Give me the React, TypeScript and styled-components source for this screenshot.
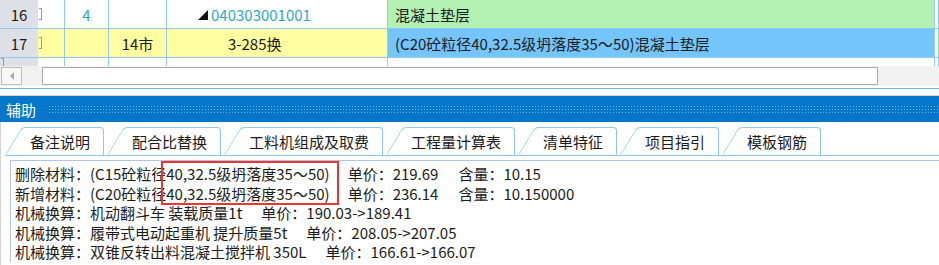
import styled, { createGlobalStyle } from 'styled-components';

const GlobalStyle = createGlobalStyle`
  html, body {
    margin: 0;
    padding: 0;
    background: #fff;
  }
  body {
    font-family: "Noto Sans CJK SC", "Noto Sans", sans-serif;
    font-size: 15px;
    color: #1b1b1b;
  }
`;

const Page = styled.div`
  width: 939px;
  height: 265px;
  overflow: hidden;
  display: flex;
  flex-direction: column;
`;

/* ---------- grid ---------- */

const Grid = styled.div`
  height: 66px;
  overflow: hidden;
  display: flex;
  flex-direction: column;
`;

const Row = styled.div<{ $h: number }>`
  display: grid;
  grid-template-columns: 38px 27px 44px 58px 221px 547px 1fr;
  height: ${(p) => p.$h}px;
  flex-shrink: 0;
  border-bottom: 1px solid #8fcbf1;
`;

const Cell = styled.div<{ $bg?: string; $color?: string; $pad?: number; $center?: boolean }>`
  box-sizing: border-box;
  display: flex;
  align-items: center;
  justify-content: ${(p) => (p.$center ? 'center' : 'flex-start')};
  padding-left: ${(p) => p.$pad ?? 0}px;
  background: ${(p) => p.$bg ?? '#fff'};
  color: ${(p) => p.$color ?? '#1b1b1b'};
  border-right: 1px solid #8fcbf1;
  white-space: nowrap;
  overflow: hidden;
  position: relative;
`;

const HeadCell = styled(Cell)`
  background: #dde0e6;
  justify-content: center;
  border-right: none;
`;

const Bracket = styled.span`
  position: absolute;
  left: 1px;
  top: 50%;
  margin-top: -6px;
  width: 2px;
  height: 10px;
  border: 1px solid #9a9a9a;
  border-left: none;
`;

const Tri = styled.span`
  display: inline-block;
  width: 0;
  height: 0;
  border-left: 10px solid transparent;
  border-bottom: 10px solid #111;
  margin-right: 3px;
  margin-top: 2px;
`;

/* ---------- scrollbar ---------- */

const ScrollBar = styled.div`
  height: 20px;
  background: #f1f1f1;
  display: flex;
  align-items: center;
  gap: 20px;
  padding-left: 1px;
`;

const ScrollBtn = styled.div`
  box-sizing: border-box;
  width: 21px;
  height: 18px;
  border: 1px solid #bdbdbd;
  background: #f7f7f7;
  display: flex;
  align-items: center;
  justify-content: center;
  &::before {
    content: '';
    border-right: 4px solid #a8a8a8;
    border-top: 4px solid transparent;
    border-bottom: 4px solid transparent;
  }
`;

const Thumb = styled.div`
  box-sizing: border-box;
  width: 836px;
  height: 18px;
  border: 1px solid #ababab;
  background: #fff;
`;

const Divider = styled.div`
  margin-top: 2px;
  height: 1px;
  background: #6ab8ee;
  margin-bottom: 6px;
`;

/* ---------- assist panel ---------- */

const Header = styled.div`
  height: 27px;
  background: #0577cb;
  display: flex;
  align-items: center;
  padding-left: 6px;
  color: #fff;
  border-top: 1px solid #d6d6d6;
  box-sizing: border-box;
`;

const Dots = styled.div`
  flex: 1;
  margin-left: 12px;
  height: 8px;
  background-image: radial-gradient(circle, rgba(150, 200, 240, 0.75) 0.7px, transparent 1px);
  background-size: 3px 3px;
`;

const Body = styled.div`
  flex: 1;
  border-left: 1px solid #d4d4d4;
  display: flex;
  flex-direction: column;
`;

const TabStrip = styled.div`
  height: 34px;
  box-sizing: border-box;
  margin-left: 4px;
  display: flex;
  align-items: flex-end;
  gap: 3px;
  border-bottom: 1px solid #8cc8f0;
`;

const Tab = styled.div`
  position: relative;
  height: 28px;
  box-sizing: border-box;
  padding: 1px 14px 0 25px;
  display: flex;
  align-items: center;
  white-space: nowrap;
  color: #1b1b1b;

  &::before {
    content: '';
    position: absolute;
    left: 0;
    bottom: 0;
    width: 20px;
    height: 100%;
    box-sizing: border-box;
    border-left: 1px solid #8cc8f0;
    border-top: 1px solid #8cc8f0;
    border-top-left-radius: 4px;
    transform-origin: bottom left;
    transform: skewX(-31deg);
  }

  &::after {
    content: '';
    position: absolute;
    left: 36px;
    right: 0;
    top: 0;
    bottom: 0;
    border-top: 1px solid #8cc8f0;
    border-right: 1px solid #8cc8f0;
    border-top-right-radius: 4px;
  }
`;

const Content = styled.div`
  position: relative;
  margin: 4px 0 0 9px;
  border-top: 1px solid #b2c5e6;
  border-left: 1px solid #b2c5e6;
  padding: 3px 0 0 4px;
  line-height: 19.5px;
`;

const Line = styled.div`
  white-space: nowrap;
`;

const Gap = styled.span<{ $w: number }>`
  display: inline-block;
  width: ${(p) => p.$w}px;
`;

const Mark = styled.div`
  position: absolute;
  left: 150px;
  top: 0px;
  width: 178px;
  height: 44px;
  box-sizing: border-box;
  border: 2px solid #ee3535;
`;

const teal = '#2aa9be';
const tabs = ['备注说明', '配合比替换', '工料机组成及取费', '工程量计算表', '清单特征', '项目指引', '模板钢筋'];

export default function App() {
  return (
    <Page>
      <GlobalStyle />
      <Grid>
        <Row $h={28}>
          <HeadCell>16</HeadCell>
          <Cell><Bracket /></Cell>
          <Cell $center $color={teal}>4</Cell>
          <Cell />
          <Cell $pad={31} $color={teal}><Tri />040303001001</Cell>
          <Cell $bg="#b3f0b4" $pad={7}>混凝土垫层</Cell>
          <Cell />
        </Row>
        <Row $h={28}>
          <HeadCell>17</HeadCell>
          <Cell $bg="#ffffa2"><Bracket /></Cell>
          <Cell $bg="#ffffa2" />
          <Cell $bg="#ffffa2" $center>14市</Cell>
          <Cell $bg="#ffffa2" $pad={61}>3-285换</Cell>
          <Cell $bg="#74c4fe" $pad={7}>(C20砼粒径40,32.5级坍落度35～50)混凝土垫层</Cell>
          <Cell $bg="#ffffa2" />
        </Row>
        <Row $h={12}>
          <HeadCell><Bracket /></HeadCell>
          <Cell />
          <Cell />
          <Cell />
          <Cell />
          <Cell />
          <Cell />
        </Row>
      </Grid>
      <ScrollBar>
        <ScrollBtn />
        <Thumb />
      </ScrollBar>
      <Divider />
      <Header>
        辅助
        <Dots />
      </Header>
      <Body>
        <TabStrip>
          {tabs.map((t) => (
            <Tab key={t}>{t}</Tab>
          ))}
        </TabStrip>
        <Content>
          <Mark />
          <Line>
            删除材料：(C15砼粒径40,32.5级坍落度35～50)<Gap $w={18} />单价：219.69<Gap $w={20} />含量：10.15
          </Line>
          <Line>
            新增材料：(C20砼粒径40,32.5级坍落度35～50)<Gap $w={18} />单价：236.14<Gap $w={20} />含量：10.150000
          </Line>
          <Line>
            机械换算：机动翻斗车 装载质量1t<Gap $w={19} />单价：190.03-&gt;189.41
          </Line>
          <Line>
            机械换算：履带式电动起重机 提升质量5t<Gap $w={19} />单价：208.05-&gt;207.05
          </Line>
          <Line>
            机械换算：双锥反转出料混凝土搅拌机 350L<Gap $w={19} />单价：166.61-&gt;166.07
          </Line>
        </Content>
      </Body>
    </Page>
  );
}
